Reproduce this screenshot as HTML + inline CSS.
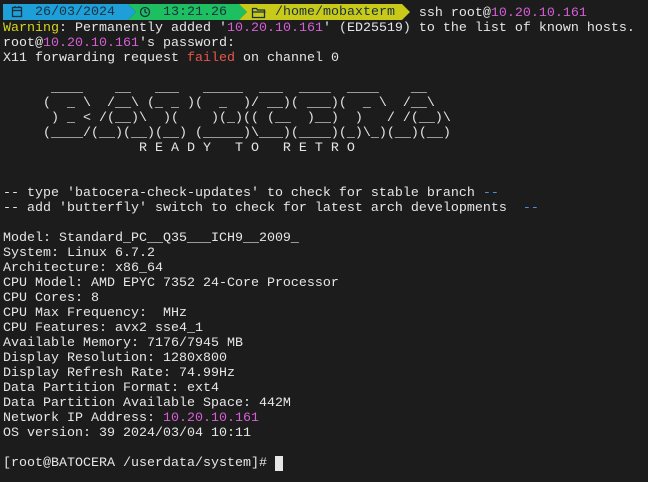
<!DOCTYPE html>
<html><head><meta charset="utf-8"><style>
html,body{margin:0;padding:0;background:#1c1c1c;width:648px;height:482px;overflow:hidden}
pre{position:absolute;left:3px;top:6px;margin:0;font-family:"Liberation Mono","DejaVu Sans Mono",monospace;font-size:13.33px;line-height:15px;color:#e6e6e6;white-space:pre}
.y{color:#d4d41e}.m{color:#d65fd6}.r{color:#e8554c}.b{color:#4c8fe0}
.bar{position:absolute;top:4px;height:16px}
.seg{position:absolute;top:0;height:16px;font-family:"Liberation Mono",monospace;font-size:13.33px;line-height:17px;color:#183040;white-space:pre}
</style></head><body>
<div class="bar" style="left:0;width:648px">
<svg width="420" height="16" style="position:absolute;left:0;top:0">
<polygon points="3,0 128,0 136,8 128,16 3,16" fill="#1f9fd8"/>
<polygon points="128,0 239,0 247,8 239,16 128,16 136,8" fill="#1dbf60"/>
<polygon points="239,0 402,0 410,8 402,16 239,16 247,8" fill="#c9c919"/>
<g fill="none" stroke="#183040" stroke-width="1.3">
<rect x="12.5" y="3.5" width="9" height="9"/><line x1="12" y1="6.5" x2="22" y2="6.5"/>
<line x1="15" y1="2" x2="15" y2="4"/><line x1="19" y1="2" x2="19" y2="4"/>
<circle cx="145" cy="8" r="4.5"/><polyline points="145,5 145,8 147,9"/>
<path d="M252.5 4.5h4l1 1.5h7v7.5h-12z M252.5 8h13"/>
</g>
</svg>
<span class="seg" style="left:35px">26/03/2024</span>
<span class="seg" style="left:163px">13:21.26</span>
<span class="seg" style="left:275px">/home/mobaxterm</span>
</div>
<pre>                                                    ssh root@<span class="m">10.20.10.161</span>
<span class="y">Warning</span>: Permanently added '<span class="m">10.20.10.161</span>' (ED25519) to the list of known hosts.
root@<span class="m">10.20.10.161</span>'s password:
X11 forwarding request <span class="r">failed</span> on channel 0

      ____    __   ___   _____  ___  ____  ____    __
     (  _ \  /__\ (_ _ )(  _  )/ __)( ___)(  _ \  /__\
      ) _ < /(__)\  )(    )(_)(( (__  )__)  )   / /(__)\
     (____/(__)(__)(__) (_____)\___)(____)(_)\_)(__)(__)
                 R E A D Y   T O   R E T R O


-- type 'batocera-check-updates' to check for stable branch <span class="b">--</span>
-- add 'butterfly' switch to check for latest arch developments  <span class="b">--</span>

Model: Standard_PC__Q35___ICH9__2009_
System: Linux 6.7.2
Architecture: x86_64
CPU Model: AMD EPYC 7352 24-Core Processor
CPU Cores: 8
CPU Max Frequency:  MHz
CPU Features: avx2 sse4_1
Available Memory: 7176/7945 MB
Display Resolution: 1280x800
Display Refresh Rate: 74.99Hz
Data Partition Format: ext4
Data Partition Available Space: 442M
Network IP Address: <span class="m">10.20.10.161</span>
OS version: 39 2024/03/04 10:11

[root@BATOCERA /userdata/system]# <span style="background:#e6e6e6"> </span></pre>
</body></html>
